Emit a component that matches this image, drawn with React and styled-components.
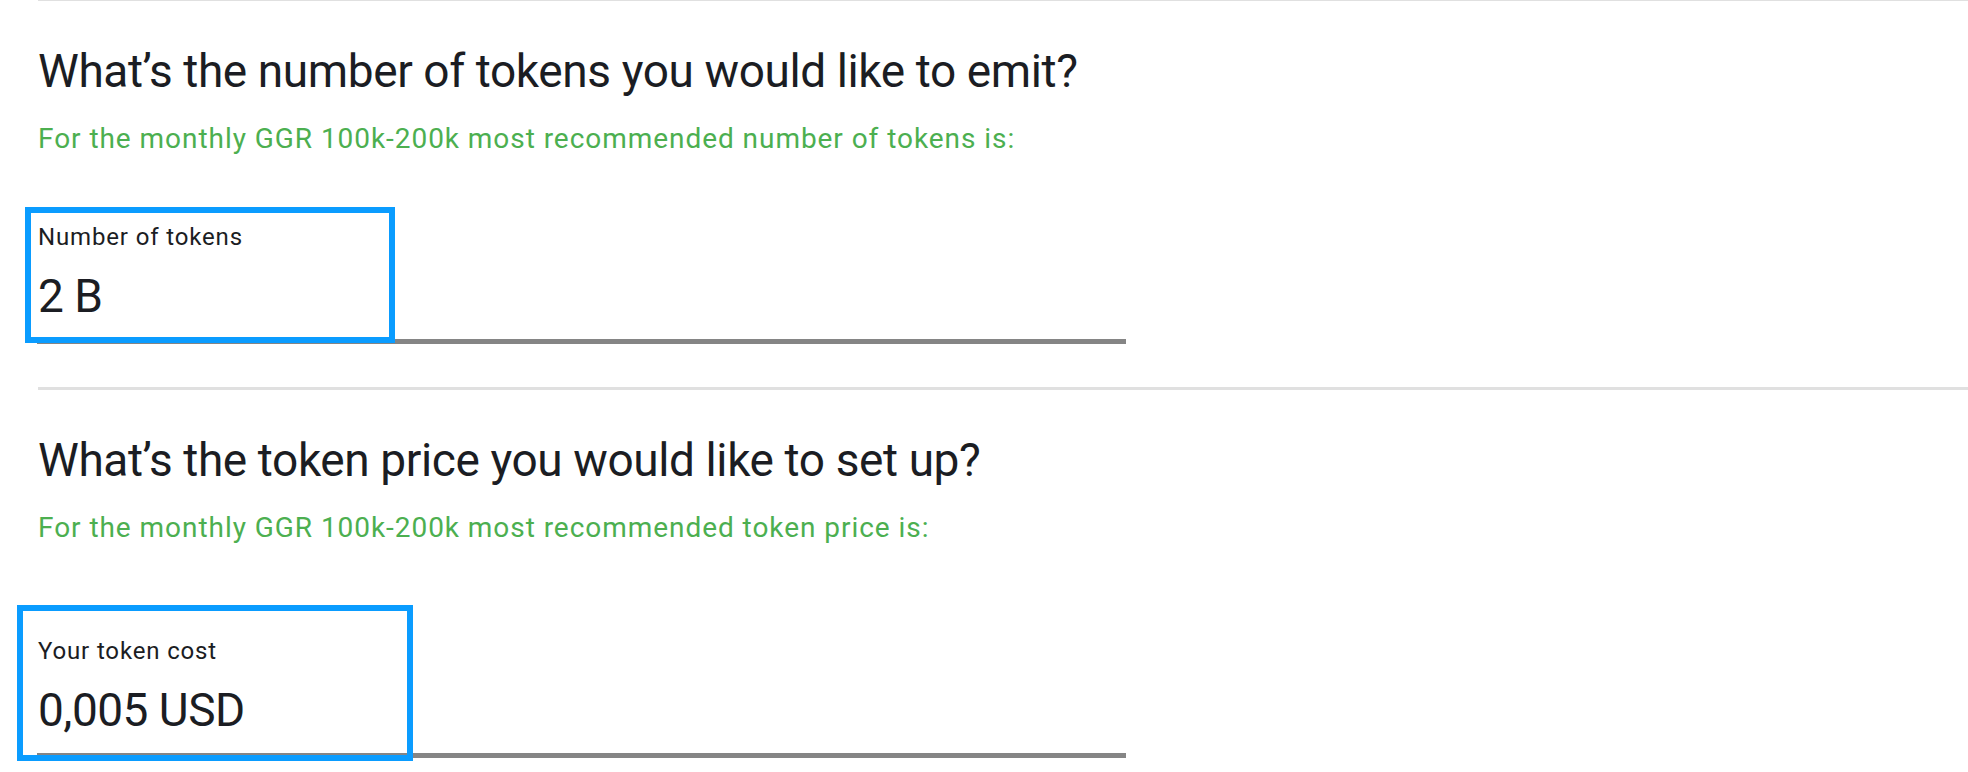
import React from 'react';
import styled, { createGlobalStyle } from 'styled-components';

const GlobalStyle = createGlobalStyle`
  html, body {
    margin: 0;
    padding: 0;
    background: #ffffff;
  }
  body {
    font-family: 'Roboto', 'Liberation Sans', sans-serif;
  }
`;

const Page = styled.div`
  padding-left: 38px;
  display: flex;
  flex-direction: column;
`;

const Section = styled.section`
  border-top: ${({ $thin }) => ($thin ? '1px' : '3px')} solid #e0e0e0;
  padding-top: 43px;
  padding-bottom: 43px;
  display: flex;
  flex-direction: column;
`;

const Question = styled.h2`
  margin: 0;
  font-size: 46px;
  line-height: 54px;
  font-weight: 400;
  letter-spacing: -0.4px;
  color: #1b1d23;
`;

const Hint = styled.p`
  margin: 24px 0 0;
  font-size: 28px;
  line-height: 33px;
  font-weight: 400;
  letter-spacing: 0.95px;
  color: #4caf50;
`;

const Field = styled.div`
  position: relative;
  margin-top: ${({ $offset }) => $offset}px;
  width: 1088px;
  display: flex;
  flex-direction: column;
`;

const Label = styled.label`
  font-size: 24px;
  line-height: 28px;
  letter-spacing: 0.85px;
  color: #1b1d23;
`;

const Value = styled.div`
  margin-top: 18px;
  padding-bottom: 16px;
  font-size: 46px;
  line-height: 54px;
  letter-spacing: -0.5px;
  color: #1b1d23;
  border-bottom: 5px solid #858585;
  margin-left: -1px;
  padding-left: 1px;
`;

const Highlight = styled.div`
  position: absolute;
  left: ${({ $left }) => $left}px;
  top: ${({ $top }) => $top}px;
  width: ${({ $w }) => $w}px;
  height: ${({ $h }) => $h}px;
  box-sizing: border-box;
  border: 6px solid #0a9cff;
  pointer-events: none;
  z-index: 1;
`;

const questions = [
  {
    title: 'What’s the number of tokens you would like to emit?',
    hint: 'For the monthly GGR 100k-200k most recommended number of tokens is:',
    label: 'Number of tokens',
    value: '2 B',
    offset: 68,
    box: { left: -13, top: -16, w: 370, h: 136 },
  },
  {
    title: 'What’s the token price you would like to set up?',
    hint: 'For the monthly GGR 100k-200k most recommended token price is:',
    label: 'Your token cost',
    value: '0,005 USD',
    offset: 93,
    box: { left: -21, top: -32, w: 396, h: 156 },
  },
];

export default function App() {
  return (
    <>
      <GlobalStyle />
      <Page>
        {questions.map((q, i) => (
          <Section key={q.label} $thin={i === 0}>
            <Question>{q.title}</Question>
            <Hint>{q.hint}</Hint>
            <Field $offset={q.offset}>
              <Highlight $left={q.box.left} $top={q.box.top} $w={q.box.w} $h={q.box.h} />
              <Label>{q.label}</Label>
              <Value>{q.value}</Value>
            </Field>
          </Section>
        ))}
      </Page>
    </>
  );
}
